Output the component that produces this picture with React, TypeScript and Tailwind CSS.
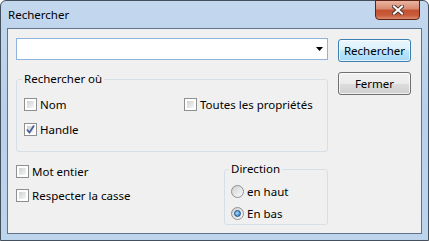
import type { ReactNode } from 'react'

function CheckBox({ checked = false }: { checked?: boolean }) {
  return (
    <span className="relative flex h-[13px] w-[13px] shrink-0 border border-[#8e8f8f] bg-white p-[2px]">
      <span className="flex-1 bg-gradient-to-br from-[#cdd0d4] to-[#f7f7f7]" />
      {checked && (
        <svg className="absolute inset-0" width="11" height="11" viewBox="0 0 11 11">
          <path d="M2 5.5 L4.5 8.5 L9 1.5" fill="none" stroke="#4a5f97" strokeWidth="1.8" />
        </svg>
      )}
    </span>
  )
}

function Radio({ checked = false }: { checked?: boolean }) {
  return (
    <span className="flex h-[13px] w-[13px] shrink-0 items-center justify-center rounded-full border border-[#8e8f8f] bg-gradient-to-br from-[#cfd1d4] to-[#fbfbfb]">
      {checked && (
        <span className="h-[7px] w-[7px] rounded-full border border-[#1b4f8c] bg-[radial-gradient(circle_at_40%_40%,#9fdcfb,#2a6fb8)]" />
      )}
    </span>
  )
}

function Option({ children, control }: { children: ReactNode; control: ReactNode }) {
  return (
    <label className="flex h-[15px] items-center gap-[3px] leading-[15px] text-black">
      {control}
      <span>{children}</span>
    </label>
  )
}

export default function App() {
  return (
    <div className="flex h-[241px] w-[429px] flex-col rounded-t-[6px] border border-[#44505d] bg-[linear-gradient(180deg,#c3d8ee_0%,#b8d0ea_45%,#bdd4ed_100%)] px-[6px] pb-[6px] font-['Noto_Sans',sans-serif] text-[11.5px]">
      {/* title bar */}
      <div className="flex h-[27px] shrink-0 items-start justify-between">
        <span className="mt-[6px] pl-[1px] leading-[15px] text-black">Rechercher</span>
        <button className="-mt-[1px] mr-[2px] flex h-[20px] w-[45px] items-center justify-center rounded-b-[4px] border border-[#5e2318] bg-[linear-gradient(180deg,#e9b3a0_0%,#d98a70_45%,#c2502f_50%,#c95d3c_80%,#dc8a6c_100%)]">
          <svg width="12" height="10" viewBox="0 0 12 10">
            <path d="M2 1.5 L10 8.5 M10 1.5 L2 8.5" stroke="#4b3a38" strokeWidth="4" strokeLinecap="square" />
            <path d="M2 1.5 L10 8.5 M10 1.5 L2 8.5" stroke="#ffffff" strokeWidth="2" strokeLinecap="square" />
          </svg>
        </button>
      </div>

      {/* client area */}
      <div className="flex flex-1 border border-[#62738a] bg-[#f0f0f0] pl-[8px] pt-[9px]">
        <div className="flex w-[312px] flex-col">
          <div className="flex h-[22px] items-center justify-end border border-[#8fb4dc] bg-white pr-[4px]">
            <svg width="7" height="4" viewBox="0 0 7 4">
              <polygon points="0,0 7,0 3.5,4" fill="#000" />
            </svg>
          </div>

          <fieldset className="mt-[12px] h-[80px] rounded-[3px] border border-[#d5dfe5] pl-[7px] pt-[11px]">
            <legend className="-ml-[2px] px-[2px] leading-[14px] text-black">Rechercher où</legend>
            <div className="flex">
              <div className="w-[160px]">
                <Option control={<CheckBox />}>Nom</Option>
              </div>
              <Option control={<CheckBox />}>Toutes les propriétés</Option>
            </div>
            <div className="mt-[10px]">
              <Option control={<CheckBox checked />}>Handle</Option>
            </div>
          </fieldset>

          <div className="flex items-start">
            <div className="mt-[12px] flex flex-col gap-[9px]">
              <Option control={<CheckBox />}>Mot entier</Option>
              <Option control={<CheckBox />}>Respecter la casse</Option>
            </div>
            <fieldset className="ml-auto mt-[10px] h-[63px] w-[104px] rounded-[3px] border border-[#d5dfe5] pl-[6px] pt-[8px]">
              <legend className="-ml-[2px] px-[2px] leading-[14px] text-black">Direction</legend>
              <div className="flex flex-col gap-[7px]">
                <Option control={<Radio />}>en haut</Option>
                <Option control={<Radio checked />}>En bas</Option>
              </div>
            </fieldset>
          </div>
        </div>

        <div className="ml-[10px] mt-[1px] flex flex-col gap-[10px]">
          <button className="h-[23px] w-[73px] rounded-[3px] border border-[#3c7fb1] bg-[linear-gradient(180deg,#eaf6fd_0%,#d9f0fc_50%,#bee6fd_50%,#a7d9f5_100%)] leading-[15px] text-black shadow-[inset_0_0_0_1px_rgba(255,255,255,0.7)]">
            Rechercher
          </button>
          <button className="h-[23px] w-[73px] rounded-[3px] border border-[#707070] bg-[linear-gradient(180deg,#f2f2f2_0%,#ebebeb_50%,#dddddd_50%,#cfcfcf_100%)] leading-[15px] text-black shadow-[inset_0_0_0_1px_rgba(255,255,255,0.7)]">
            Fermer
          </button>
        </div>
      </div>
    </div>
  )
}
